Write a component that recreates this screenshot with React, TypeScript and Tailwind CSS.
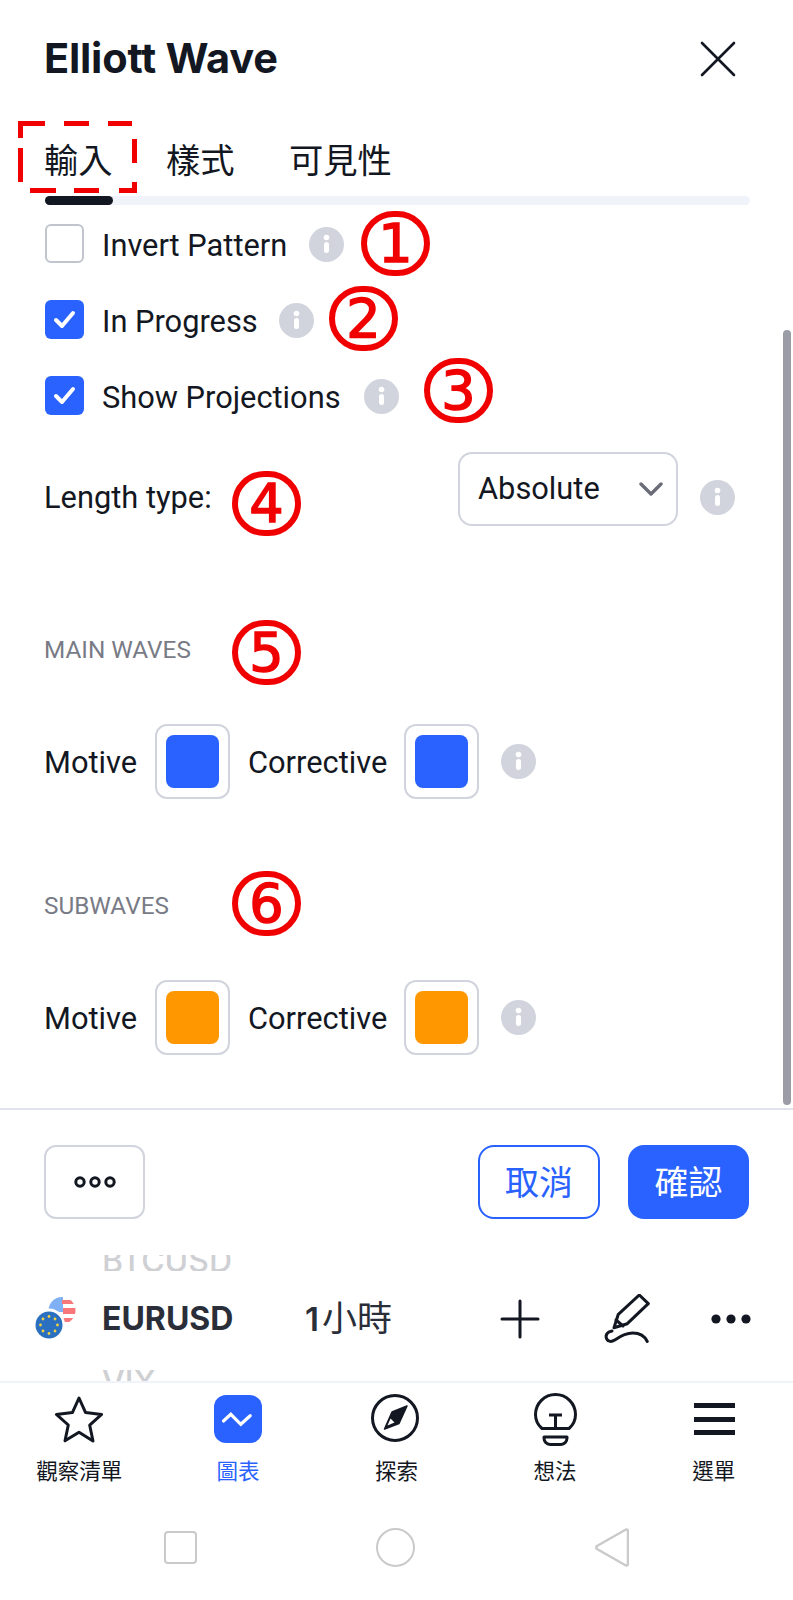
import React from "react";

const rob = "font-['Roboto',sans-serif]";
const cjk = "font-['Inter','Noto_Sans_CJK_TC',sans-serif]";

function Info() {
  return (
    <svg width="35" height="35" viewBox="0 0 35 35" className="shrink-0">
      <circle cx="17.5" cy="17.5" r="17.5" fill="#d1d4dc" />
      <circle cx="17.5" cy="10.5" r="2.8" fill="#fff" />
      <rect x="15" y="15" width="5" height="11" rx="2.5" fill="#fff" />
    </svg>
  );
}

function Check({ on }: { on?: boolean }) {
  return on ? (
    <div className="w-[39px] h-[39px] rounded-[6px] bg-[#2962ff] flex items-center justify-center shrink-0">
      <svg width="23" height="19" viewBox="0 0 23 19" fill="none">
        <path d="M3 10l6 6L20 3" stroke="#fff" strokeWidth="4" strokeLinecap="round" strokeLinejoin="round" />
      </svg>
    </div>
  ) : (
    <div className="w-[39px] h-[39px] rounded-[6px] border-2 border-[#c1c4cd] bg-white shrink-0" />
  );
}

function Mark({ n, x, y }: { n: number; x: number; y: number }) {
  return (
    <div
      className="absolute w-[69px] h-[65px] rounded-full border-[6px] border-[#f00000] flex items-center justify-center text-[#f00000] font-['DejaVu_Sans',sans-serif] font-normal text-[54px] leading-none [-webkit-text-stroke:1.5px_#f00000]"
      style={{ left: x, top: y }}
    >
      {n}
    </div>
  );
}

function Swatch({ color }: { color: string }) {
  return (
    <div className="w-[75px] h-[75px] rounded-[12px] border-2 border-[#d1d4dc] flex items-center justify-center shrink-0">
      <div className="w-[53px] h-[53px] rounded-[8px]" style={{ background: color }} />
    </div>
  );
}

function ColorRow({ color }: { color: string }) {
  return (
    <div className={`flex items-center h-[75px] text-[30.8px] text-[#131722] ${rob}`}>
      <span className="w-[111px] pt-[3px]">Motive</span>
      <Swatch color={color} />
      <span className="ml-[18px] w-[156px] pt-[3px]">Corrective</span>
      <Swatch color={color} />
      <div className="ml-[22px]"><Info /></div>
    </div>
  );
}

function CheckRow({ on, label, gap }: { on?: boolean; label: string; gap: number }) {
  return (
    <div className="flex items-center h-[39px]">
      <Check on={on} />
      <span className={`ml-[18px] pt-[6px] text-[30.8px] leading-none text-[#131722] ${rob}`}>{label}</span>
      <div className="mt-[2px]" style={{ marginLeft: gap }}><Info /></div>
    </div>
  );
}

function NavItem({ label, active, children }: { label: string; active?: boolean; children: React.ReactNode }) {
  return (
    <div className="flex-1 flex flex-col items-center">
      <div className="h-[56px] flex items-center justify-center">{children}</div>
      <div className={`mt-[10px] text-[21.5px] leading-[28px] ${cjk} ${active ? "text-[#2962ff]" : "text-[#131722]"}`}>{label}</div>
    </div>
  );
}

export default function App() {
  return (
    <div className="relative w-[793px] h-[1600px] bg-white overflow-hidden">
      {/* Header */}
      <div className="flex items-center justify-between pl-[44px] pr-[57px] pt-[34px] h-[84px]">
        <h1 className="font-['Inter',sans-serif] font-bold text-[41.5px] leading-none text-[#131722] tracking-[-0.2px]">Elliott Wave</h1>
        <svg width="36" height="36" viewBox="0 0 36 36" fill="none">
          <path d="M2 2l32 32M34 2L2 34" stroke="#131722" strokeWidth="2.6" strokeLinecap="round" />
        </svg>
      </div>
      {/* Tabs */}
      <div className={`mt-[55px] flex pl-[44px] text-[34.3px] leading-[44px] text-[#131722] ${cjk}`}>
        <span className="w-[122px]">輸入</span>
        <span className="w-[123px]">樣式</span>
        <span>可見性</span>
      </div>
      <div className="mt-[13px] ml-[45px] w-[705px] h-[9px] rounded-full bg-[#f0f3fa]">
        <div className="w-[68px] h-[9px] rounded-full bg-[#131722]" />
      </div>
      {/* Form */}
      <div className="pl-[45px] mt-[19px] flex flex-col gap-[37px]">
        <CheckRow label="Invert Pattern" gap={22} />
        <CheckRow on label="In Progress" gap={21} />
        <CheckRow on label="Show Projections" gap={23} />
      </div>
      <div className={`ml-[44px] mt-[37px] flex items-center h-[74px] text-[30.8px] text-[#131722] ${rob}`}>
        <span className="w-[414px] pt-[18px]">Length type:</span>
        <div className="w-[220px] h-[74px] rounded-[14px] border-2 border-[#d1d4dc] flex items-center justify-between pl-[18px] pr-[13px]">
          <span className="pt-[1px]">Absolute</span>
          <svg width="24" height="14" viewBox="0 0 24 14" fill="none">
            <path d="M2 2l10 10L22 2" stroke="#6a6d78" strokeWidth="3.4" strokeLinecap="round" strokeLinejoin="round" />
          </svg>
        </div>
        <div className="ml-[22px] mt-[17px]"><Info /></div>
      </div>
      <div className={`ml-[44px] mt-[110px] text-[24.3px] leading-[28px] text-[#787b86] ${rob}`}>MAIN WAVES</div>
      <div className="ml-[44px] mt-[60px]"><ColorRow color="#2962ff" /></div>
      <div className={`ml-[44px] mt-[93px] text-[24.3px] leading-[28px] text-[#787b86] ${rob}`}>SUBWAVES</div>
      <div className="ml-[44px] mt-[60px]"><ColorRow color="#ff9800" /></div>
      {/* Footer */}
      <div className="mt-[53px] h-[2px] bg-[#e0e3eb]" />
      <div className={`mt-[35px] flex items-center justify-between pl-[44px] pr-[44px] h-[74px] ${cjk}`}>
        <div className="w-[101px] h-[74px] rounded-[12px] border-2 border-[#d1d4dc] flex items-center justify-center">
          <svg width="44" height="14" viewBox="0 0 44 14" fill="none" stroke="#131722" strokeWidth="3">
            <circle cx="7" cy="7" r="4.2" /><circle cx="22" cy="7" r="4.2" /><circle cx="37" cy="7" r="4.2" />
          </svg>
        </div>
        <div className="flex gap-[28px]">
          <div className="w-[122px] h-[74px] rounded-[16px] border-2 border-[#2962ff] text-[#2962ff] text-[34px] flex items-center justify-center">取消</div>
          <div className="w-[121px] h-[74px] rounded-[16px] bg-[#2962ff] text-white text-[34px] flex items-center justify-center">確認</div>
        </div>
      </div>
      {/* Symbol row */}
      <div className="relative mt-[36px] h-[126px] overflow-hidden">
        <div className="absolute left-0 right-0 top-0 h-[16px] overflow-hidden">
          <div className="absolute left-[102px] -top-[9px] font-['Inter',sans-serif] font-medium text-[32px] leading-[30px] text-[#cfd0d3]">BTCUSD</div>
        </div>
        <div className="absolute left-[102px] bottom-0 h-[15px] overflow-hidden">
          <div className="font-['Inter',sans-serif] font-medium text-[32px] leading-[34px] text-[#cfd0d3]">VIX</div>
        </div>
        <div className="flex items-center h-[126px] pt-[1px]">
          <svg width="50" height="44" viewBox="0 0 50 44" className="ml-[33px] shrink-0">
            <defs>
              <clipPath id="us"><circle cx="29" cy="13.5" r="13.500" /></clipPath>
            </defs>
            <g clipPath="url(#us)">
              <rect x="15" y="0" width="28" height="27" fill="#fff" />
              <rect x="15" y="0" width="15" height="15" fill="#7fb0f5" />
              <rect x="29" y="3" width="14" height="4" fill="#f7777a" />
              <rect x="30" y="11" width="14" height="6" fill="#f7777a" />
              <rect x="30" y="21" width="14" height="4" fill="#f7777a" />
            </g>
            <circle cx="16" cy="27.500" r="16" fill="#fff" />
            <circle cx="16" cy="28" r="13.500" fill="#2a6fc0" />
            {[0, 1, 2, 3, 4, 5, 6, 7].map((i) => (
              <circle key={i} cx={16 + 8.5 * Math.cos((i * Math.PI) / 4)} cy={28 + 8.5 * Math.sin((i * Math.PI) / 4)} r="1.4" fill="#f5d33c" />
            ))}
          </svg>
          <div className="ml-[19px] w-[203px] font-['Inter',sans-serif] font-bold text-[32px] leading-none text-[#2a2e39]">EURUSD</div>
          <div className={`w-[89px] whitespace-nowrap text-[35px] leading-none text-[#2a2e39] ${cjk}`}>
            <span className="font-semibold text-[33px] mr-[3px]">1</span>小時
          </div>
          <svg width="40" height="40" viewBox="0 0 40 40" fill="none" className="ml-[106px]" stroke="#131722" strokeWidth="3" strokeLinecap="round">
            <path d="M20 2v36M2 20h36" />
          </svg>
          <svg width="50" height="50" viewBox="-3 0 50 50" fill="none" stroke="#131722" strokeWidth="3" strokeLinejoin="round" strokeLinecap="round" className="ml-[63px]">
            <path d="M33.300 1l9 8.700-21 20-13.300 4 4.300-13.400z" />
            <path d="M10 26l7 6" />
            <path d="M6 37C1 38-1 41 .7 45c1.500 3 5 3 8 1 3-2 10-7 18-7 7 0 12 3 14.600 8.500" />
          </svg>
          <svg width="40" height="10" viewBox="0 0 40 10" className="ml-[58px]" fill="#131722">
            <circle cx="5" cy="5" r="4.6" /><circle cx="20" cy="5" r="4.6" /><circle cx="35" cy="5" r="4.6" />
          </svg>
        </div>
      </div>
      <div className="h-[2px] bg-[#f0f3fa]" />
      {/* Nav */}
      <div className="flex mt-[8px]">
        <NavItem label="觀察清單">
          <svg width="50" height="48" viewBox="0 0 50 48" fill="none" stroke="#131722" strokeWidth="3" strokeLinejoin="round">
            <path d="M25 3l6.600 14.600 16 1.800-11.900 10.800 3.300 15.800L25 37.200 11 45.800l3.300-15.800L2.400 19.400l16-1.800z" />
          </svg>
        </NavItem>
        <NavItem label="圖表" active>
          <svg width="48" height="48" viewBox="0 0 48 48" fill="none">
            <rect width="48" height="48" rx="12" fill="#2962ff" />
            <path d="M9.500 26l7.300-6.700 10 10 9.400-8.600" stroke="#fff" strokeWidth="3.200" strokeLinecap="round" />
          </svg>
        </NavItem>
        <NavItem label="探索">
          <svg width="48" height="48" viewBox="0 0 48 48" fill="none" className="-mt-[3px] -ml-[2px]">
            <circle cx="24" cy="24" r="22.500" stroke="#131722" strokeWidth="3" />
            <path d="M36 12 L21 18 L13.500 35 L28 29.500 Z" fill="#131722" stroke="#131722" strokeWidth="1.500" strokeLinejoin="round" />
            <path d="M19.500 24.500 L23.500 28.500 L16.500 31.500 Z" fill="#fff" />
          </svg>
        </NavItem>
        <NavItem label="想法">
          <svg width="43" height="53" viewBox="0 0 43 53" fill="none" stroke="#131722" strokeWidth="3" strokeLinejoin="round">
            <path d="M8 35.500C4 32 1.500 27 1.500 21.500 1.500 10.500 10.500 1.500 21.500 1.500s20 9 20 20c0 5.500-2.500 10.500-6.500 14z" />
            <path d="M15 22h13M21.500 22v13" />
            <path d="M10 44h23v1c0 3.500-2.500 6.500-6 6.500H16c-3.500 0-6-3-6-6.500z" />
          </svg>
        </NavItem>
        <NavItem label="選單">
          <div className="w-[41px] ml-[2px] flex flex-col gap-[8.500px]">
            <div className="h-[5px] bg-[#131722]" />
            <div className="h-[5px] bg-[#131722]" />
            <div className="h-[5px] bg-[#131722]" />
          </div>
        </NavItem>
      </div>
      {/* System bar */}
      <div className="flex mt-[43px] items-center">
        <div className="ml-[164px] w-[33px] h-[33px] rounded-[4px] border-[2.5px] border-[#cacaca]" />
        <div className="ml-[179px] w-[39px] h-[39px] rounded-full border-[2.5px] border-[#cacaca]" />
        <svg width="34" height="39" viewBox="0 0 34 39" fill="none" className="ml-[180px]">
          <path d="M30 2c1.500-1 3-.4 3 1.500v32c0 1.900-1.500 2.500-3 1.500L2 21c-1-1-1-2 0-3z" stroke="#cacaca" strokeWidth="2.500" strokeLinejoin="round" />
        </svg>
      </div>
      {/* Overlays */}
      <div className="absolute left-[783px] top-[330px] w-[8px] h-[775px] rounded-full bg-[#9a9da6]" />
      <svg width="119" height="72" viewBox="0 0 119 72" fill="none" className="absolute left-[18px] top-[121px]">
        <path
          d="M2.500 17V2.500H27M46 2.500H71M90 2.500H114M2.500 27V61M116.500 18V42M116.500 61V69.500H101M81 69.500H56M38 69.500H12"
          stroke="#f00000"
          strokeWidth="5"
        />
      </svg>
      <Mark n={1} x={361} y={211} />
      <Mark n={2} x={329} y={286} />
      <Mark n={3} x={424} y={358} />
      <Mark n={4} x={232} y={471} />
      <Mark n={5} x={232} y={620} />
      <Mark n={6} x={232} y={871} />
    </div>
  );
}
